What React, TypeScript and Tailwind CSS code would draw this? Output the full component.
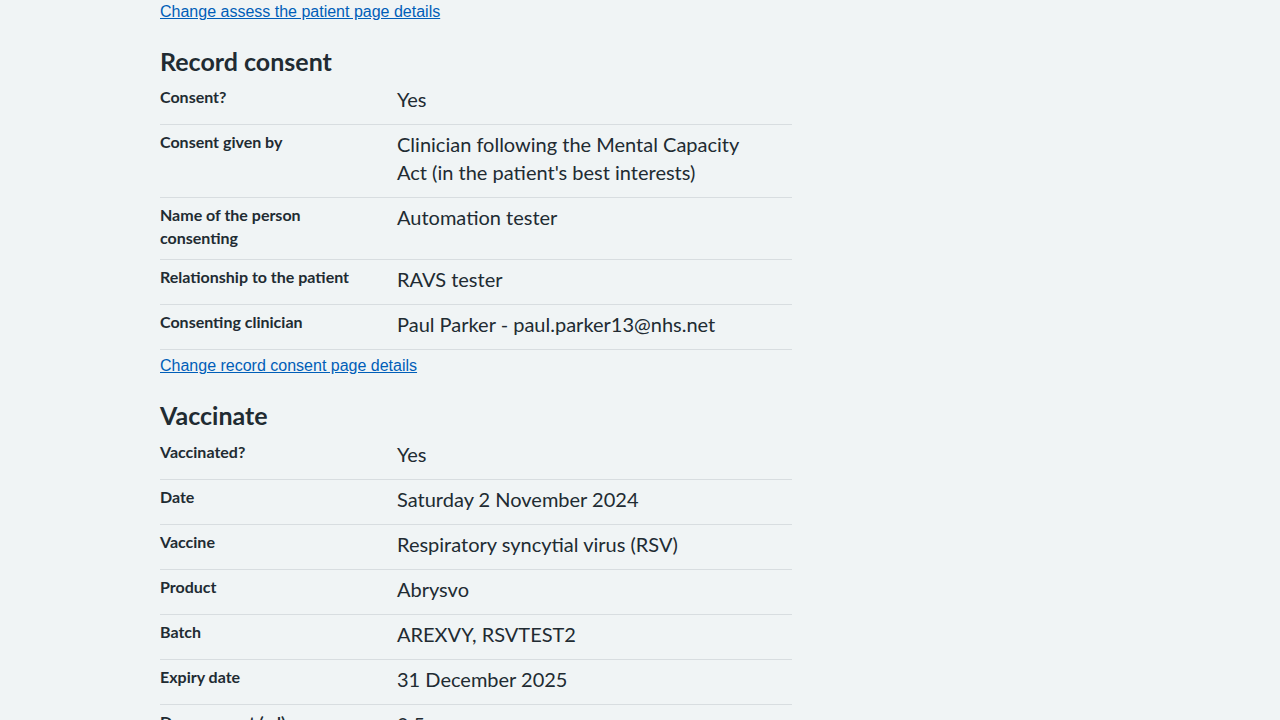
import React from "react";

type Row = { k: string; v: string };

const consent: Row[] = [
  { k: "Consent?", v: "Yes" },
  { k: "Consent given by", v: "Clinician following the Mental Capacity Act (in the patient's best interests)" },
  { k: "Name of the person consenting", v: "Automation tester" },
  { k: "Relationship to the patient", v: "RAVS tester" },
  { k: "Consenting clinician", v: "Paul Parker - paul.parker13@nhs.net" },
];

const vaccinate: Row[] = [
  { k: "Vaccinated?", v: "Yes" },
  { k: "Date", v: "Saturday 2 November 2024" },
  { k: "Vaccine", v: "Respiratory syncytial virus (RSV)" },
  { k: "Product", v: "Abrysvo" },
  { k: "Batch", v: "AREXVY, RSVTEST2" },
  { k: "Expiry date", v: "31 December 2025" },
  { k: "Dose amount (ml)", v: "0.5" },
  { k: "Injection site", v: "Left arm (upper position)" },
];

function List({ rows }: { rows: Row[] }) {
  return (
    <dl className="w-[632px]">
      {rows.map((r) => (
        <div key={r.k} className="flex border-b border-[#d8dde0]">
          <dt className="w-[237px] shrink-0 pt-[6px] pb-[10px] pr-6 text-[16px] leading-[22.5px] font-bold">{r.k}</dt>
          <dd className="flex-1 pt-[5px] pb-[11px] pr-[32px] text-[20px] leading-[28px]">{r.v}</dd>
        </div>
      ))}
    </dl>
  );
}

function ChangeLink({ text }: { text: string }) {
  return (
    <a href="#" className="block text-[16px] leading-6 text-[#005eb8] underline" style={{ fontFamily: '"Liberation Sans", Arial, sans-serif' }}>
      {text}
    </a>
  );
}

export default function App() {
  return (
    <div className="min-h-screen bg-[#f0f4f5] text-[#212b32]" style={{ fontFamily: 'Lato, "Noto Sans", sans-serif' }}>
      <div className="pl-[160px]">
        <ChangeLink text="Change assess the patient page details" />
        <h2 className="mt-[21px] mb-[3px] text-[25px] leading-8 font-bold">Record consent</h2>
        <List rows={consent} />
        <div className="mt-1">
          <ChangeLink text="Change record consent page details" />
        </div>
        <h2 className="mt-[21px] mb-[4px] text-[25px] leading-8 font-bold">Vaccinate</h2>
        <List rows={vaccinate} />
      </div>
    </div>
  );
}
